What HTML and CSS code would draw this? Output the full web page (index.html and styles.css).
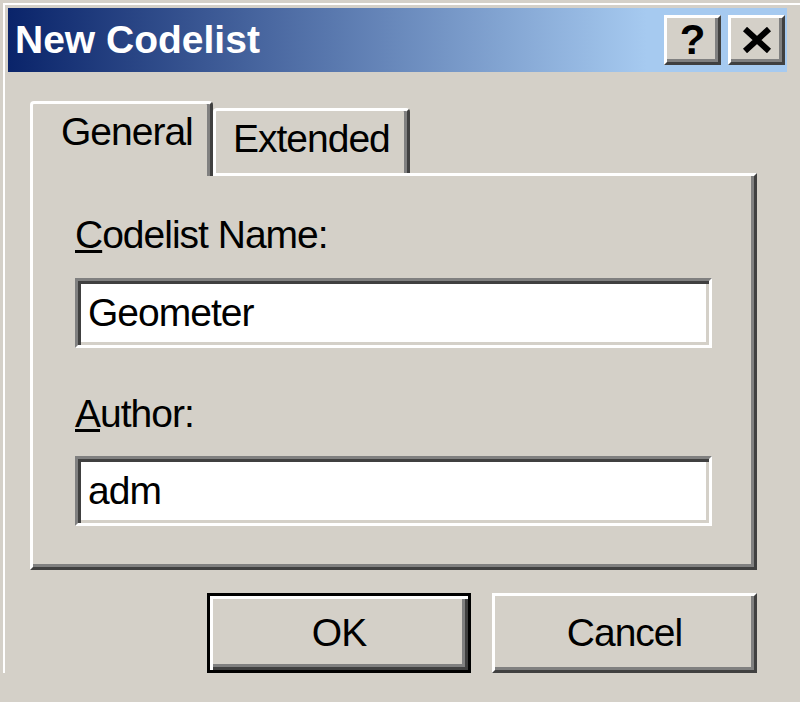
FILE: index.html
```html
<!DOCTYPE html>
<html>
<head>
    <meta charset="UTF-8">
    <title>New Codelist</title>
    <link rel="stylesheet" href="styles.css">
</head>
<body>
    <div class="ventana">
        <!-- Barra de título -->
        <div class="barra-titulo">
            <span class="titulo">New Codelist</span>
            <div class="botones-titulo">
                <button class="boton-titulo ayuda">?</button>
                <button class="boton-titulo cerrar">
                    <svg width="30" height="26" viewBox="0 0 30 26">
                        <path d="M3 2 L27 24 M27 2 L3 24" stroke="#000" stroke-width="6" fill="none"/>
                    </svg>
                </button>
            </div>
        </div>

        <div class="contenido">
            <!-- Pestañas -->
            <div class="pestanas">
                <div class="pestana activa">General</div>
                <div class="pestana extendida">Extended</div>
            </div>

            <div class="panel">
                <label class="etiqueta"><u>C</u>odelist Name:</label>
                <div class="campo">Geometer</div>
                <label class="etiqueta segunda"><u>A</u>uthor:</label>
                <div class="campo">adm</div>
            </div>

            <div class="acciones">
                <button class="boton defecto">OK</button>
                <button class="boton">Cancel</button>
            </div>
        </div>
    </div>
</body>
</html>
```

FILE: styles.css
```css
body {
    margin: 0;
    padding: 0;
    background-color: #d4d0c8;
    font-family: "Liberation Sans", Arial, sans-serif;
    color: #000;
    height: 702px;
    overflow: hidden;
}

.ventana {
    margin: 3px 0 0 3px;
    border-top: 2px solid #fff;
    border-left: 2px solid #fff;
    padding: 3px 13px 0 3px;
}

.barra-titulo {
    height: 64px;
    display: flex;
    align-items: center;
    justify-content: space-between;
    padding: 0 2px 0 7px;
    background: linear-gradient(to right, #0a246a, #a6caf0 82%);
}

.titulo {
    color: #fff;
    font-weight: bold;
    font-size: 39px;
}

.botones-titulo {
    display: flex;
    gap: 7px;
}

.boton-titulo {
    width: 57px;
    height: 50px;
    padding: 0;
    background-color: #d4d0c8;
    border: 3px solid;
    border-color: #fff #404040 #404040 #fff;
    box-shadow: inset -3px -3px 0 #808080;
    display: flex;
    align-items: center;
    justify-content: center;
    font-family: "Liberation Sans", Arial, sans-serif;
    font-weight: bold;
    font-size: 42px;
    color: #000;
    line-height: 1;
}

.contenido {
    padding: 29px 30px 0 22px;
}

.pestanas {
    display: flex;
    align-items: flex-start;
    height: 72px;
}

.pestana {
    box-sizing: border-box;
    background-color: #d4d0c8;
    border-top: 3px solid #fff;
    border-left: 3px solid #fff;
    border-right: 3px solid #404040;
    box-shadow: inset -3px 0 0 #808080;
    border-radius: 4px 4px 0 0;
    font-size: 39px;
    letter-spacing: -1px;
    line-height: 42px;
    padding-top: 7px;
}

.pestana.activa {
    width: 183px;
    height: 75px;
    padding-left: 28px;
    position: relative;
    z-index: 1;
}

.pestana.extendida {
    width: 197px;
    height: 65px;
    margin-top: 7px;
    padding-left: 17px;
}

.panel {
    border: 3px solid;
    border-color: #fff #404040 #404040 #fff;
    box-shadow: inset -3px -3px 0 #808080;
    padding: 38px 42px 41px 42px;
}

.etiqueta {
    display: block;
    font-size: 39px;
    letter-spacing: -1px;
    line-height: 42px;
    height: 42px;
    margin-bottom: 22px;
}

.etiqueta.segunda {
    margin-top: 45px;
    margin-bottom: 21px;
}

.campo {
    box-sizing: border-box;
    height: 70px;
    background-color: #fff;
    border: 3px solid;
    border-color: #808080 #fff #fff #808080;
    box-shadow: inset 3px 3px 0 #404040, inset -3px -3px 0 #d4d0c8;
    display: flex;
    align-items: center;
    padding-left: 10px;
    font-size: 39px;
    letter-spacing: -1px;
}

.acciones {
    display: flex;
    justify-content: flex-end;
    gap: 21px;
    margin-top: 23px;
}

.boton {
    box-sizing: border-box;
    width: 265px;
    height: 80px;
    background-color: #d4d0c8;
    border: 3px solid;
    border-color: #fff #404040 #404040 #fff;
    box-shadow: inset -3px -3px 0 #808080;
    font-family: "Liberation Sans", Arial, sans-serif;
    font-size: 39px;
    letter-spacing: -1px;
    color: #000;
    padding: 0;
}

.boton.defecto {
    width: 264px;
    border-color: #000;
    box-shadow: inset 3px 3px 0 #fff, inset -3px -3px 0 #404040, inset -6px -6px 0 #808080;
}
```
